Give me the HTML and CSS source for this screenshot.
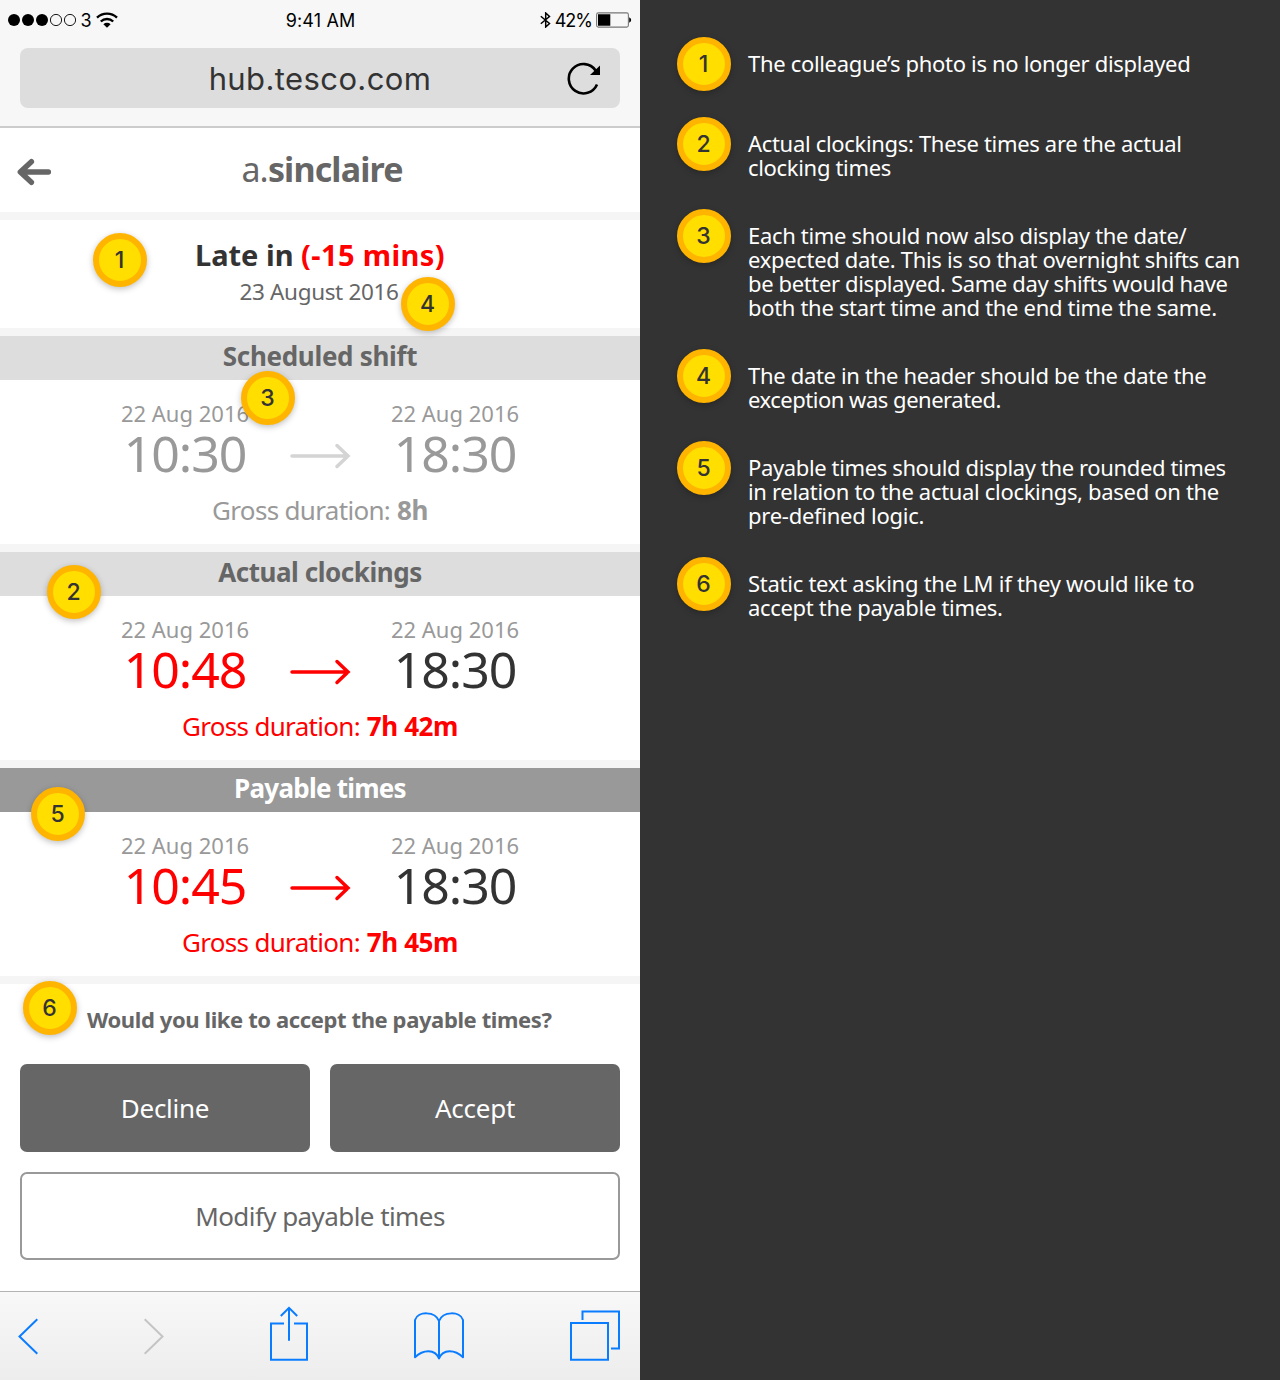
FILE: index.html
```html
<!DOCTYPE html>
<html lang="en">
<head>
<meta charset="utf-8">
<title>Clocking exception</title>
<link rel="stylesheet" href="styles.css">
</head>
<body>
<div class="board">
  <main class="phone">
    <header class="browser">
      <div class="status">
        <div class="status-left">
          <svg width="68" height="14" viewBox="0 0 68 14"><g fill="#000"><circle cx="6" cy="7" r="6"/><circle cx="20" cy="7" r="6"/><circle cx="34" cy="7" r="6"/></g><g fill="none" stroke="#000" stroke-width=".9"><circle cx="48" cy="7" r="5.6"/><circle cx="62" cy="7" r="5.6"/></g></svg>
          <span class="carrier">3</span>
          <svg width="22" height="16" viewBox="0 0 22 16"><g fill="none" stroke="#000" stroke-width="2.4"><path d="M1 5.600a14.600 14.600 0 0 1 20 0"/><path d="M4.800 9.500a9 9 0 0 1 12.400 0"/></g><path d="M7.400 12.200a5.300 5.300 0 0 1 7.200 0L11 15.800z"/></svg>
        </div>
        <span class="clock">9:41 AM</span>
        <div class="status-right">
          <svg width="12" height="16" viewBox="0 0 12 16"><path d="M1.800 4.200L10.500 11.500 6.700 15V1L10.500 4.500 1.800 11.800" fill="none" stroke="#000" stroke-width="1.5"/></svg>
          <span class="charge">42%</span>
          <svg width="36" height="16" viewBox="0 0 36 16"><rect x=".6" y=".9" width="31.800" height="14.200" rx="1.800" fill="none" stroke="#777" stroke-width="1.100"/><path d="M2 2.200h12.300v11.600H2zM33.200 5.200q2 1 2 2.800t-2 2.800z"/></svg>
        </div>
      </div>
      <div class="address">
        <span class="url">hub.tesco.com</span>
        <svg class="reload" width="34" height="34" viewBox="0 0 34 34"><path d="M30 22.600A14.700 14.700 0 1 1 28.600 8.400" fill="none" stroke="#000" stroke-width="2.600"/><path d="M33 3.600v9.400H23z"/></svg>
      </div>
    </header>
    <section class="card titlebar">
      <svg class="back" width="36" height="28" viewBox="0 0 36 28"><path d="M15.400 3.700L4.300 14l11.100 10.300M5 14h27.400" fill="none" stroke="#666" stroke-width="5.400" stroke-linecap="round" stroke-linejoin="round"/></svg>
      <h1 class="name">a.<b>sinclaire</b></h1>
    </section>
    <section class="card summary">
      <h2 class="headline">Late in <em>(-15 mins)</em></h2>
      <p class="summary-date">23 August 2016</p>
    </section>
    <section class="card shift scheduled">
      <h3>Scheduled shift</h3>
      <div class="times">
        <div class="slot"><span class="day">22 Aug 2016</span><span class="time">10:30</span></div>
        <svg class="arrow" width="62" height="26" viewBox="0 0 62 26"><path d="M3 13h56M48 2.500L59 13 48 23.500" fill="none" stroke="currentColor" stroke-width="3.500" stroke-linecap="round"/></svg>
        <div class="slot"><span class="day">22 Aug 2016</span><span class="time">18:30</span></div>
      </div>
      <p class="gross"><span>Gross duration:</span> <b>8h</b></p>
    </section>
    <section class="card shift late actual">
      <h3>Actual clockings</h3>
      <div class="times">
        <div class="slot"><span class="day">22 Aug 2016</span><span class="time changed">10:48</span></div>
        <svg class="arrow" width="62" height="26" viewBox="0 0 62 26"><path d="M3 13h56M48 2.500L59 13 48 23.500" fill="none" stroke="currentColor" stroke-width="3.500" stroke-linecap="round"/></svg>
        <div class="slot"><span class="day">22 Aug 2016</span><span class="time">18:30</span></div>
      </div>
      <p class="gross"><span>Gross duration:</span> <b>7h 42m</b></p>
    </section>
    <section class="card shift late payable">
      <h3>Payable times</h3>
      <div class="times">
        <div class="slot"><span class="day">22 Aug 2016</span><span class="time changed">10:45</span></div>
        <svg class="arrow" width="62" height="26" viewBox="0 0 62 26"><path d="M3 13h56M48 2.500L59 13 48 23.500" fill="none" stroke="currentColor" stroke-width="3.500" stroke-linecap="round"/></svg>
        <div class="slot"><span class="day">22 Aug 2016</span><span class="time">18:30</span></div>
      </div>
      <p class="gross"><span>Gross duration:</span> <b>7h 45m</b></p>
    </section>
    <section class="card decision">
      <p class="question">Would you like to accept the payable times?</p>
      <div class="actions">
        <button class="solid">Decline</button>
        <button class="solid">Accept</button>
        <button class="outline">Modify payable times</button>
      </div>
    </section>
    <nav class="toolbar">
      <svg width="20" height="56" viewBox="0 0 20 56"><path d="M19.300 13.300L1.500 30.500l17.800 17.200"/></svg>
      <svg class="off" width="20" height="56" viewBox="0 0 20 56"><path d="M.7 13.300l17.800 17.200L.7 47.700"/></svg>
      <svg width="38" height="56" viewBox="0 0 38 56"><path d="M14 17.600H1v36.200h36V17.600H24M19 34.800V2M10.800 10L19 1.800l8.200 8.200"/></svg>
      <svg class="book" width="50" height="56" viewBox="0 0 50 56"><path d="M25 15C21 5 4 5 1 14V51.200C9 43.500 21 42.500 25 52.500C29 42.500 41 43.500 49 51.200V14C46 5 29 5 25 15V53"/></svg>
      <svg width="50" height="56" viewBox="0 0 50 56"><path d="M1 17h37v36.800H1zM12.500 14V5.600H49v36.900h-8"/></svg>
    </nav>
    <span class="badge pin pin-1">1</span>
    <span class="badge pin pin-2">2</span>
    <span class="badge pin pin-3">3</span>
    <span class="badge pin pin-4">4</span>
    <span class="badge pin pin-5">5</span>
    <span class="badge pin pin-6">6</span>
  </main>
  <aside class="notes">
    <div class="note"><span class="badge">1</span><p>The colleague’s photo is no longer displayed</p></div>
    <div class="note"><span class="badge">2</span><p>Actual clockings: These times are the actual<br>clocking times</p></div>
    <div class="note"><span class="badge">3</span><p>Each time should now also display the date/<br>expected date. This is so that overnight shifts can<br><span class="snug">be better displayed. Same day shifts would have</span><br>both the start time and the end time the same.</p></div>
    <div class="note"><span class="badge">4</span><p>The date in the header should be the date the<br><span class="tight">exception was generated.</span></p></div>
    <div class="note"><span class="badge">5</span><p><span class="snug">Payable times should display the rounded times</span><br>in relation to the actual clockings, based on the<br><span class="loose">pre-defined logic.</span></p></div>
    <div class="note"><span class="badge">6</span><p><span class="loose">Static text asking the LM if they would like to</span><br>accept the payable times.</p></div>
  </aside>
</div>
</body>
</html>
```
FILE: styles.css
```css
* { box-sizing: border-box; }
body, h1, h2, h3, p { margin: 0; }
body { font-family: "Noto Sans", sans-serif; color: #333; background: #333; }
svg { display: block; flex: none; }
.board { display: grid; grid-template-columns: 640px 640px; height: 1380px; }

/* Phone screen */
.phone { position: relative; display: flex; flex-direction: column; gap: 8px; background: #f5f5f5; overflow: hidden; }
.browser { height: 128px; margin-bottom: -8px; background: #f7f7f7; border-bottom: 2px solid #ccc; font-family: Inter, sans-serif; }
.status { display: grid; grid-template-columns: 1fr auto 1fr; align-items: center; height: 40px; padding: 0 8px; font-size: 18px; color: #000; }
.status-left, .status-right { display: flex; align-items: center; gap: 4.5px; }
.status-right { justify-content: flex-end; gap: 4px; }
.carrier { letter-spacing: -.6px; }
.clock { letter-spacing: .15px; padding-left: 1px; }
.charge { letter-spacing: -1px; }
.address { display: grid; position: relative; align-items: center; justify-items: center; height: 60px; margin: 8px 20px 0; border-radius: 8px; background: #ddd; }
.url { font-size: 31px; letter-spacing: .4px; }
.reload { position: absolute; right: 19px; top: 14px; }

.card { background: #fff; flex: none; }
.titlebar { display: grid; grid-template-columns: 36px 1fr 36px; align-items: center; height: 84px; padding: 4px 16px 0; }
.name { padding: 0 0 7px 4px; font-size: 34px; line-height: 48px; font-weight: 400; letter-spacing: -.85px; color: #666; text-align: center; }
.summary { height: 108px; padding-top: 15px; text-align: center; }
.headline { font-size: 29px; line-height: 40px; }
.headline em { font-style: normal; letter-spacing: .4px; color: #f00; }
.summary-date { font-size: 22.5px; line-height: 34px; letter-spacing: -.35px; color: #666; padding-right: 2px; }

.shift { height: 208px; text-align: center; color: #333; }
.shift h3 { height: 44px; line-height: 40px; font-size: 26px; letter-spacing: -.3px; color: #666; background: #ddd; }
.actual h3 { letter-spacing: -.45px; }
.payable h3 { letter-spacing: -.75px; color: #fff; background: #999; }
.times { display: grid; grid-template-columns: 130px 62px 130px; column-gap: 39px; justify-content: center; padding-top: 19px; }
.slot { display: flex; flex-direction: column; align-items: center; }
.day { font-size: 22px; line-height: 28px; color: #999; white-space: nowrap; }
.time { font-size: 50px; line-height: 53px; letter-spacing: -1.1px; }
.arrow { margin-top: 44px; }
.gross { margin-top: 12px; font-size: 26px; line-height: 36px; }
.gross span { letter-spacing: -.68px; }
.gross b { letter-spacing: -.4px; }
.scheduled, .scheduled .gross { color: #999; }
.scheduled .arrow { color: #d4d4d4; }
.late .arrow, .late .gross, .changed { color: #f00; }

.decision { height: 307px; margin-bottom: -8px; padding: 19px 20px 0; }
.question { font-size: 22px; line-height: 32px; font-weight: 700; letter-spacing: -.39px; color: #666; padding-left: 67px; white-space: nowrap; }
.actions { display: grid; grid-template-columns: 1fr 1fr; gap: 20px; margin-top: 29px; }
button { height: 88px; padding: 0; border: 0; border-radius: 7px; font: 26px "Noto Sans", sans-serif; letter-spacing: -.25px; }
.solid { color: #fff; background: #666; }
.outline { grid-column: span 2; color: #666; background: #fff; border: 2px solid #999; letter-spacing: -.57px; }

.toolbar { display: flex; gap: 106px; height: 89px; padding: 14px 20px 0 18px; border-top: 1px solid #b2b2b2; background: linear-gradient(#f8f8f8, #ededed); }
.toolbar path { fill: none; stroke: #0a7cff; stroke-width: 2; }
.toolbar .off path { stroke: #c4c4c4; }
.toolbar .book path { stroke-linejoin: round; }

/* Numbered markers, pinned over the screen and beside each note */
.badge { display: grid; place-items: center; flex: none; width: 54px; height: 54px; padding-right: 1px; border: 6px solid #ffb400; border-radius: 50%; background: #ffde00; box-shadow: 0 2px 6px rgba(0, 0, 0, .25); color: #333; font: 500 23px Inter, sans-serif; }
.pin { position: absolute; }
.pin-1 { left: 93px; top: 233px; }
.pin-2 { left: 47px; top: 565px; }
.pin-3 { left: 241px; top: 371px; }
.pin-4 { left: 401px; top: 277px; }
.pin-5 { left: 31px; top: 787px; }
.pin-6 { left: 23px; top: 981px; }

/* Notes */
.notes { display: flex; flex-direction: column; gap: 29px; padding: 37px 0 0 37px; color: #fff; background: #333; }
.note { display: flex; gap: 17px; min-height: 51px; }
.note .badge { margin-bottom: -3px; }
.note p { padding: 14px 0 1px; font-size: 22px; line-height: 24px; letter-spacing: -.32px; white-space: nowrap; }
.note .loose { letter-spacing: -.26px; }
.note .snug { letter-spacing: -.37px; }
.note .tight { letter-spacing: -.48px; }
```
